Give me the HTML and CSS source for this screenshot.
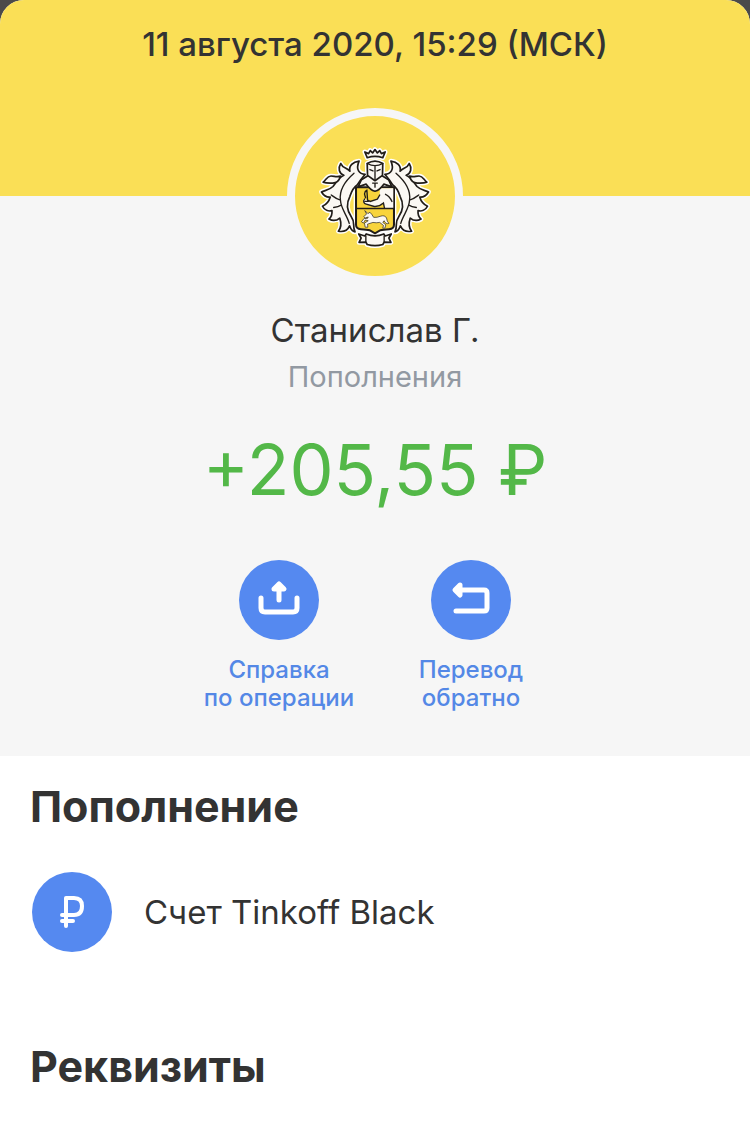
FILE: index.html
```html
<!DOCTYPE html>
<html lang="ru">

<head>
    <meta charset="UTF-8">
    <meta name="viewport" content="width=device-width, initial-scale=1.0">
    <title>Пополнение</title>
    <link rel="stylesheet" href="styles.css">
</head>

<body>
    <main class="sheet">
        <header class="banner">
            <time class="date" datetime="2020-08-11T15:29+03:00">11 августа 2020, 15:29 (МСК)</time>
        </header>

        <section class="summary">
            <div class="avatar">
                <svg class="crest" viewBox="0 0 360 330" aria-hidden="true">
                    <defs>
                        <!-- Left half of the mantling -->
                        <g id="mantling">
                            <path d="M151 101C134 100 122 88 133 62C115 64 102 76 106 92C98 82 84 83 79 69C70 83 74 98 88 104C70 112 65 126 56 137C45 148 32 148 22 153C29 164 38 169 48 168C44 182 37 190 25 195C31 207 43 211 53 208C54 218 50 228 44 233C55 239 68 237 76 230C82 248 80 259 72 269C88 272 100 264 105 253C109 264 114 270 121 271C112 250 123 244 110 226C95 205 96 185 106 166C111 151 117 139 128 132L138 117Z" />
                            <path d="M27 124C36 118 38 106 50 106C60 106 68 110 78 106C75 118 67 127 55 127C44 127 37 128 27 124Z" />
                        </g>
                        <g id="figure">
                            <path d="M157 52L150 35L161 40L166 31L173 38L180 28L187 38L194 31L199 40L210 35L203 52Q180 44 157 52Z" />
                            <path d="M159 105L140 117L130 138L154 130Q166 147 180 151Q194 147 206 130L230 138L220 117L201 105Z" />
                            <path d="M157 69Q180 55 203 69L202 104L180 120L158 104Z" />
                            <path d="M132 277L150 283L154 277Q180 288 206 277L210 283L228 277L221 289L227 302L207 301L203 308Q180 315 157 308L153 301L133 302L139 289Z" />
                        </g>
                    </defs>
                    <g class="crest-halo">
                        <use href="#mantling" />
                        <use href="#mantling" transform="translate(360 0) scale(-1 1)" />
                        <use href="#figure" />
                        <path d="M124 139H236V262L180 275L124 262Z" />
                    </g>
                    <g class="crest-line">
                        <use href="#mantling" />
                        <use href="#mantling" transform="translate(360 0) scale(-1 1)" />
                    </g>
                    <g class="crest-vein">
                        <path d="M118 98C94 119 74 148 78 177C79 203 98 222 104 246M78 177C66 174 59 168 51 162M80 192C72 197 65 198 58 199" />
                        <path d="M242 98C266 119 286 148 282 177C281 203 262 222 256 246M282 177C294 174 301 168 309 162M280 192C288 197 295 198 302 199" />
                    </g>
                    <path class="crest-shield" d="M124 139H236V250Q236 262 222 263Q203 264 196 266L180 275L164 266Q157 264 138 263Q124 262 124 250Z" />
                    <!-- Arm with the knife -->
                    <path class="crest-white" d="M194 142H234V201H208L205 187Q193 198 178 196L154 190Q142 186 146 174L158 177L166 181L186 174L194 162Z" />
                    <g class="crest-vein">
                        <path d="M149 174C144 181 147 187 154 189L178 196Q193 197 205 186L208 201M158 177L166 181L187 174M194 162L187 174M152 170L149 159Q150 150 156 148L158 176M151 181H160M211 160Q223 165 230 181" />
                    </g>
                    <!-- Unicorn -->
                    <path class="crest-white crest-horse" d="M150 208L159 217L165 213L171 220L176 228Q187 229 195 225Q209 220 214 230Q215 240 221 246Q211 249 207 238L203 243L212 250L209 260H203L205 252L194 243Q184 245 174 243L158 248L159 257H151L149 245L160 238L151 236L146 245L140 241L148 231L158 231L160 227L151 230L147 226L155 218Z" />
                    <path class="crest-mid" d="M124 202H236" />
                    <g class="crest-line">
                        <use href="#figure" />
                    </g>
                    <g class="crest-vein">
                        <path d="M157 69Q180 82 203 69M180 77V117M165 87L174 91M195 87L186 91M173 127H187M180 127V139M153 283V301M207 283V301" />
                    </g>
                </svg>
            </div>

            <h1 class="name">Станислав Г.</h1>
            <p class="category">Пополнения</p>
            <p class="amount">+205,55 ₽</p>

            <div class="actions">
                <button class="action" type="button">
                    <span class="circle">
                        <svg class="icon" viewBox="0 0 80 80" aria-hidden="true">
                            <path d="M22 38V48Q22 52 26 52H54Q58 52 58 48V38" />
                            <path d="M40 40V27" />
                            <path class="icon-head" d="M35 29L40 24L45 29Z" />
                        </svg>
                    </span>
                    <span>Справка<br>по операции</span>
                </button>
                <button class="action" type="button">
                    <span class="circle">
                        <svg class="icon" viewBox="0 0 80 80" aria-hidden="true">
                            <path d="M27 30H53Q56 30 56 33V48Q56 51 53 51H25" />
                            <path class="icon-head" d="M29 25L24 30L29 35Z" />
                        </svg>
                    </span>
                    <span>Перевод<br>обратно</span>
                </button>
            </div>
        </section>

        <section class="details">
            <h2 class="heading">Пополнение</h2>
            <div class="account">
                <span class="circle">
                    <svg class="icon icon-ruble" viewBox="0 0 80 80" aria-hidden="true">
                        <path d="M34 54V26H42Q50 26 50 34Q50 43 42 43H30M30 49H41" />
                    </svg>
                </span>
                <span class="account-name">Счет Tinkoff Black</span>
            </div>
            <h2 class="heading">Реквизиты</h2>
        </section>
    </main>
</body>

</html>
```

FILE: styles.css
```css
* {
    box-sizing: border-box;
}

body {
    margin: 0;
    background-color: #4b4a4a;
    font-family: Inter, "Liberation Sans", sans-serif;
    color: #333333;
}

h1, h2, p {
    margin: 0;
}

.sheet {
    min-height: 100vh;
    border-radius: 24px 24px 0 0;
    background-color: #ffffff;
    overflow: hidden;
}

.banner {
    height: 196px;
    padding-top: 24px;
    background-color: #fadf56;
    text-align: center;
}

.date {
    display: block;
    font-size: 33px;
    font-weight: 500;
    line-height: 40px;
}

.summary {
    display: flex;
    flex-direction: column;
    align-items: center;
    padding-bottom: 44px;
    background-color: #f6f6f6;
    text-align: center;
}

.avatar {
    display: flex;
    justify-content: center;
    align-items: center;
    width: 176px;
    height: 176px;
    margin-top: -88px;
    border: 8px solid #f6f6f6;
    border-radius: 50%;
    background-color: #fadf56;
}

.crest {
    width: 122px;
    height: 112px;
}

.crest-halo {
    fill: #ffffff;
    stroke: #ffffff;
    stroke-width: 14px;
    stroke-linejoin: round;
}

.crest-line {
    fill: #fbf8f3;
    stroke: #211d19;
    stroke-width: 5px;
    stroke-linejoin: round;
}

.crest-vein {
    fill: none;
    stroke: #211d19;
    stroke-width: 4px;
    stroke-linecap: round;
}

.crest-shield {
    fill: #f8d43c;
    stroke: #211d19;
    stroke-width: 6px;
}

.crest-white {
    fill: #fbf8f3;
}

.crest-horse {
    stroke: #211d19;
    stroke-width: 2px;
}

.crest-mid {
    stroke: #211d19;
    stroke-width: 4px;
}

.name {
    margin-top: 24px;
    font-size: 33px;
    font-weight: 400;
    line-height: 44px;
}

.category {
    margin-top: 8px;
    color: #9299a2;
    font-size: 29px;
    line-height: 34px;
}

.amount {
    margin-top: 34px;
    color: #53b848;
    font-size: 70px;
    line-height: 84px;
}

.actions {
    display: flex;
    justify-content: center;
    gap: 32px;
    margin-top: 48px;
}

.action {
    display: flex;
    flex-direction: column;
    align-items: center;
    gap: 16px;
    width: 160px;
    padding: 0;
    border: 0;
    background: none;
    color: #5488e6;
    font: inherit;
    font-size: 24px;
    font-weight: 500;
    line-height: 28px;
    white-space: nowrap;
    cursor: pointer;
}

.circle {
    flex: none;
    width: 80px;
    height: 80px;
    border-radius: 50%;
    background-color: #5589f0;
}

.icon {
    display: block;
    fill: none;
    stroke: #ffffff;
    stroke-width: 5px;
    stroke-linecap: round;
    stroke-linejoin: round;
}

.icon-head {
    fill: #ffffff;
}

.icon-ruble {
    stroke-width: 4px;
}

.details {
    padding: 24px 30px;
}

.heading {
    font-size: 43px;
    font-weight: 700;
    line-height: 52px;
}

.account {
    display: flex;
    align-items: center;
    gap: 32px;
    padding: 40px 2px 88px;
}

.account-name {
    font-size: 33px;
    line-height: 44px;
}
```
